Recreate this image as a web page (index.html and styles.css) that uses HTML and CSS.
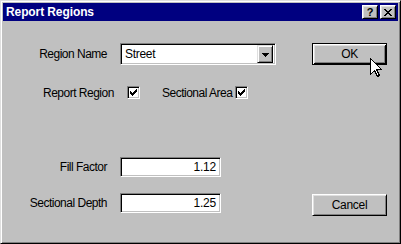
FILE: index.html
```html
<!DOCTYPE html>
<html>
<head>
<meta charset="utf-8">
<title>Report Regions</title>
<link rel="stylesheet" href="styles.css">
</head>
<body>
<div class="window">
  <div class="titlebar">
    <span class="title">Report Regions</span>
    <div class="tb-buttons">
      <div class="tb-btn help">?</div>
      <div class="tb-btn close">
        <svg width="8" height="7" viewBox="0 0 8 7" shape-rendering="crispEdges">
          <path d="M0 0h2v1h-2zM6 0h2v1h-2zM1 1h2v1h-2zM5 1h2v1h-2zM2 2h4v1h-4zM3 3h2v1h-2zM2 4h4v1h-4zM1 5h2v1h-2zM5 5h2v1h-2zM0 6h2v1h-2zM6 6h2v1h-2z" fill="#000"/>
        </svg>
      </div>
    </div>
  </div>
  <div class="client">
    <div class="row row-name">
      <span class="lbl lbl-right">Region Name</span>
      <div class="combo sunken">
        <span class="combo-text">Street</span>
        <span class="combo-btn">
          <svg width="7" height="4" viewBox="0 0 7 4" shape-rendering="crispEdges">
            <path d="M0 0h7v1h-7zM1 1h5v1h-5zM2 2h3v1h-3zM3 3h1v1h-1z" fill="#000"/>
          </svg>
        </span>
      </div>
      <div class="btn btn-default">OK
        <svg class="cursor" width="12" height="20" viewBox="0 0 12 20" shape-rendering="crispEdges">
          <path d="M0.5 0.5 L0.5 16.5 L4.5 12.5 L7.5 18.5 L9.5 17.5 L6.5 11.5 L11.5 11.5 Z" fill="#fff" stroke="#000" stroke-width="1"/>
        </svg>
      </div>
    </div>
    <div class="row row-checks">
      <span class="lbl chk-lbl1">Report Region</span>
      <span class="check sunken">
        <svg width="7" height="7" viewBox="0 0 7 7" shape-rendering="crispEdges"><path d="M6 0h1v3h-1zM5 1h1v3h-1zM4 2h1v3h-1zM3 3h1v3h-1zM2 4h1v3h-1zM1 3h1v3h-1zM0 2h1v3h-1z" fill="#000"/></svg>
      </span>
      <span class="lbl chk-lbl2">Sectional Area</span>
      <span class="check sunken">
        <svg width="7" height="7" viewBox="0 0 7 7" shape-rendering="crispEdges"><path d="M6 0h1v3h-1zM5 1h1v3h-1zM4 2h1v3h-1zM3 3h1v3h-1zM2 4h1v3h-1zM1 3h1v3h-1zM0 2h1v3h-1z" fill="#000"/></svg>
      </span>
    </div>
    <div class="row row-fill">
      <span class="lbl lbl-right">Fill Factor</span>
      <div class="field sunken">1.12</div>
    </div>
    <div class="row row-depth">
      <span class="lbl lbl-right">Sectional Depth</span>
      <div class="field sunken">1.25</div>
      <div class="btn btn-cancel">Cancel</div>
    </div>
  </div>
</div>
</body>
</html>
```
FILE: styles.css
```css
* { box-sizing: border-box; }
html, body { margin: 0; padding: 0; background: #c0c0c0; }
body { font-family: "Liberation Sans", Arial, sans-serif; font-size: 12px; color: #000; }

.window {
  width: 401px;
  height: 244px;
  background: #c0c0c0;
  border: 1px solid;
  border-color: #dfdfdf #000 #000 #dfdfdf;
  box-shadow: inset 1px 1px #fff, inset -1px -1px #808080;
  padding: 2px;
  display: flex;
  flex-direction: column;
}

.titlebar {
  height: 18px;
  background: #000080;
  display: flex;
  align-items: center;
  justify-content: space-between;
  padding: 0 2px 0 3px;
  flex: none;
}
.title {
  color: #fff;
  font-weight: bold;
  font-size: 12px;
  letter-spacing: -0.1px;
}
.tb-buttons { display: flex; gap: 2px; }
.tb-btn {
  width: 16px;
  height: 14px;
  background: #c0c0c0;
  border: 1px solid;
  border-color: #fff #000 #000 #fff;
  box-shadow: inset 1px 1px #dfdfdf, inset -1px -1px #808080;
  display: flex;
  align-items: center;
  justify-content: center;
}
.help { font-weight: bold; font-size: 11px; line-height: 1; padding-top: 1px; }

.client {
  flex: 1;
  display: flex;
  flex-direction: column;
}

.row { display: flex; align-items: center; }
.row-name { margin-top: 22px; height: 22px; }
.row-checks { margin-top: 21px; height: 13px; }
.row-fill { margin-top: 58px; height: 20px; }
.row-depth { margin-top: 16px; align-items: flex-start; }

.lbl { letter-spacing: -0.5px; white-space: nowrap; }
.lbl-right { width: 104px; text-align: right; margin-right: 13px; }
.row-depth .lbl-right { line-height: 20px; }

.sunken {
  border: 1px solid;
  border-color: #808080 #fff #fff #808080;
  box-shadow: inset 1px 1px #000, inset -1px -1px #c0c0c0;
  background: #fff;
}

.combo {
  width: 156px;
  height: 22px;
  display: flex;
  align-items: center;
  justify-content: space-between;
  padding: 1px 1px 1px 1px;
}
.combo-text { padding-left: 3px; letter-spacing: -0.3px; }
.combo-btn {
  width: 16px;
  height: 18px;
  margin: 1px 1px 1px 0;
  background: #c0c0c0;
  border: 1px solid;
  border-color: #dfdfdf #000 #000 #dfdfdf;
  box-shadow: inset 1px 1px #fff, inset -1px -1px #808080;
  display: flex;
  align-items: center;
  justify-content: center;
  padding-top: 1px;
}

.btn {
  width: 75px;
  height: 22px;
  background: #c0c0c0;
  display: flex;
  align-items: center;
  justify-content: center;
  letter-spacing: -0.3px;
}
.btn-default {
  position: relative;
  margin-left: 36px;
  border: 1px solid #000;
  box-shadow: inset 1px 1px #fff, inset -1px -1px #000, inset 2px 2px #dfdfdf, inset -2px -2px #808080;
}
.btn-cancel {
  margin-left: 91px;
  margin-top: 1px;
  border: 1px solid;
  border-color: #fff #000 #000 #fff;
  box-shadow: inset 1px 1px #dfdfdf, inset -1px -1px #808080;
}
.cursor { position: absolute; left: 57px; top: 14px; }

.chk-lbl1 { margin-left: 40px; width: 84px; }
.chk-lbl2 { margin-left: 22px; width: 73px; }
.check {
  width: 13px;
  height: 13px;
  display: flex;
  align-items: center;
  justify-content: center;
}

.field {
  width: 101px;
  height: 20px;
  text-align: right;
  padding-right: 4px;
  line-height: 18px;
  letter-spacing: -0.2px;
}
```
